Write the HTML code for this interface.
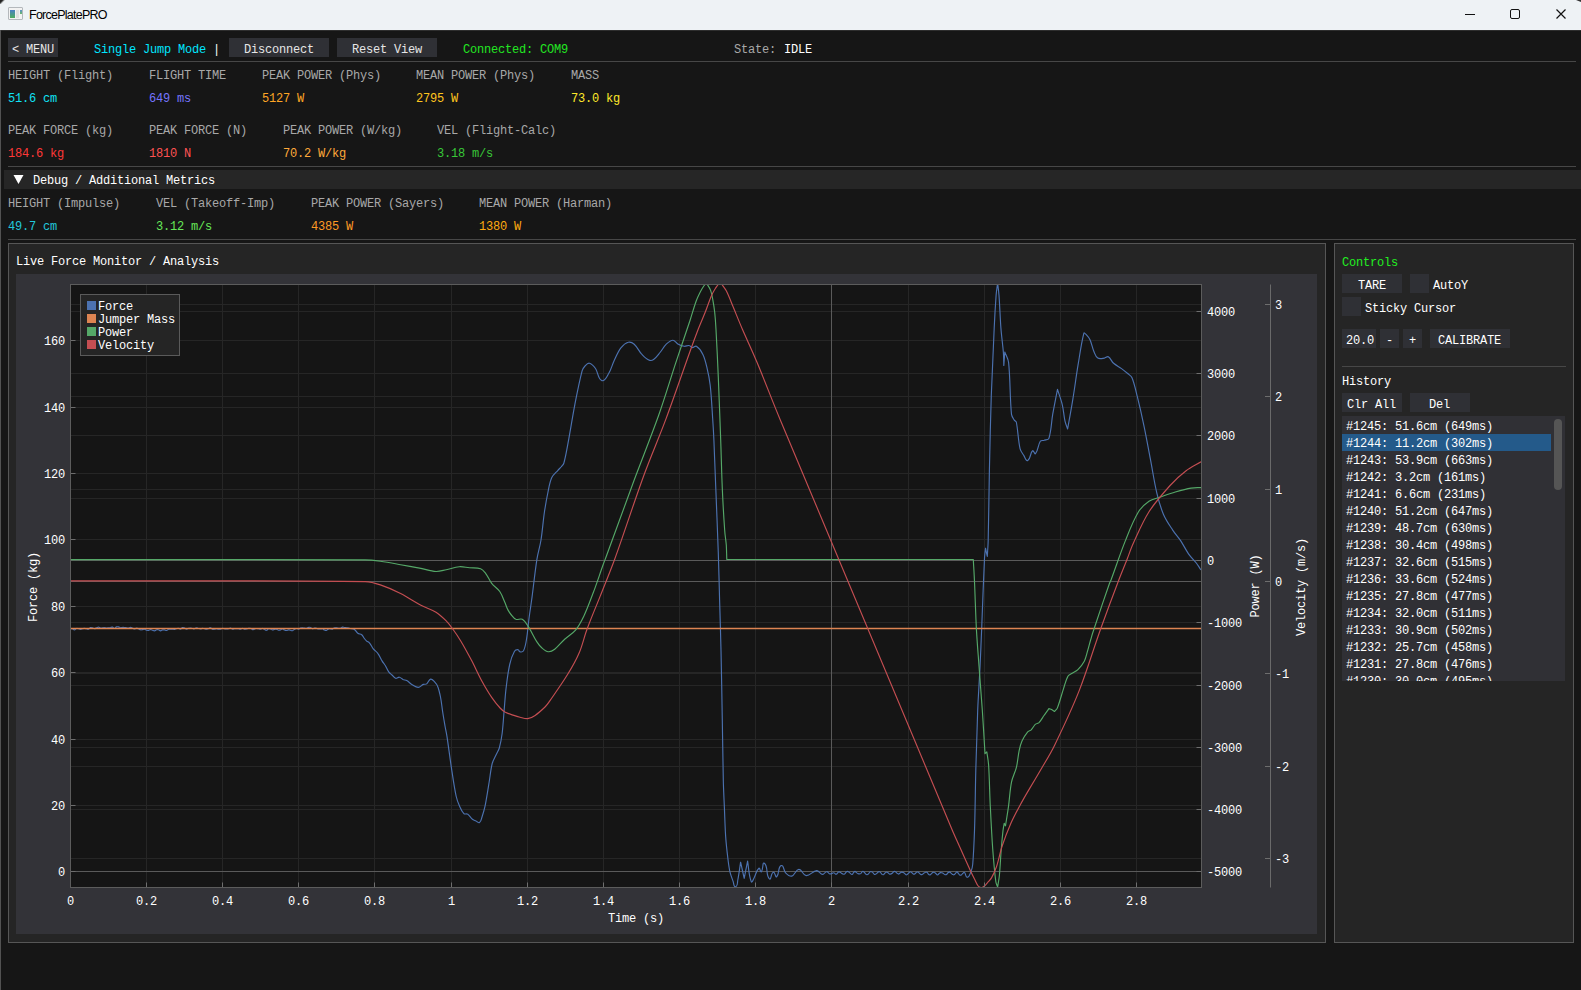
<!DOCTYPE html>
<html><head><meta charset="utf-8">
<style>
*{margin:0;padding:0;box-sizing:border-box}
html,body{width:1581px;height:990px;overflow:hidden;background:#161616}
body{position:relative;font-family:"Liberation Mono",monospace;font-size:12px;color:#e6e6e6}
.a{position:absolute;white-space:pre;line-height:14px}
.t{letter-spacing:-0.2px}
.btn{position:absolute;background:#2f3035}
.sep{position:absolute;height:1px;background:#474747}
.lbl{color:#a8a8a8}
#title{position:absolute;left:0;top:0;width:1581px;height:30px;background:#eef2f5}
</style></head><body>
<div id="title">
  <div class="a" style="left:8px;top:7px;width:15px;height:13px;border:1px solid #b4b8bc;border-radius:1px;background:#f2f2f2"></div>
  <div class="a" style="left:10px;top:10px;width:5px;height:8px;background:linear-gradient(#4a7fc4,#4fae5e)"></div>
  <div class="a" style="left:16px;top:10px;width:3px;height:8px;background:#e0e0e0"></div>
  <div class="a" style="left:20px;top:10px;width:2px;height:4px;background:linear-gradient(#5a90c8,#6ab868)"></div>
  <div class="a" style="left:0;top:0;width:5px;height:4px;background:linear-gradient(135deg,#222 30%,transparent 60%)"></div>
  <div class="a" style="left:29px;top:8px;font-family:'Liberation Sans',sans-serif;font-size:12.5px;letter-spacing:-0.75px;color:#000">ForcePlatePRO</div>
</div>
<!-- top bar -->
<div class="btn" style="left:8px;top:38px;width:50px;height:19px"></div>
<div class="a t" style="left:12px;top:43px">&lt; MENU</div>
<div class="a t" style="left:94px;top:43px;color:#00e6ff">Single Jump Mode</div>
<div class="a t" style="left:213px;top:43px;color:#fff">|</div>
<div class="btn" style="left:229px;top:38px;width:100px;height:19px"></div>
<div class="a t" style="left:244px;top:43px">Disconnect</div>
<div class="btn" style="left:337px;top:38px;width:100px;height:19px"></div>
<div class="a t" style="left:352px;top:43px">Reset View</div>
<div class="a t" style="left:463px;top:43px;color:#22e622">Connected: COM9</div>
<div class="a t" style="left:734px;top:43px;color:#a8a8a8">State:</div>
<div class="a t" style="left:784px;top:43px;color:#fff">IDLE</div>
<div class="sep" style="left:8px;top:61px;width:1568px"></div>

<!-- metrics -->
<div class="a t lbl" style="left:8px;top:69px">HEIGHT (Flight)</div>
<div class="a t lbl" style="left:149px;top:69px">FLIGHT TIME</div>
<div class="a t lbl" style="left:262px;top:69px">PEAK POWER (Phys)</div>
<div class="a t lbl" style="left:416px;top:69px">MEAN POWER (Phys)</div>
<div class="a t lbl" style="left:571px;top:69px">MASS</div>
<div class="a t" style="left:8px;top:92px;color:#10e2f5">51.6 cm</div>
<div class="a t" style="left:149px;top:92px;color:#7575ff">649 ms</div>
<div class="a t" style="left:262px;top:92px;color:#ffa625">5127 W</div>
<div class="a t" style="left:416px;top:92px;color:#ffc51f">2795 W</div>
<div class="a t" style="left:571px;top:92px;color:#ffea2a">73.0 kg</div>

<div class="a t lbl" style="left:8px;top:124px">PEAK FORCE (kg)</div>
<div class="a t lbl" style="left:149px;top:124px">PEAK FORCE (N)</div>
<div class="a t lbl" style="left:283px;top:124px">PEAK POWER (W/kg)</div>
<div class="a t lbl" style="left:437px;top:124px">VEL (Flight-Calc)</div>
<div class="a t" style="left:8px;top:147px;color:#ff3838">184.6 kg</div>
<div class="a t" style="left:149px;top:147px;color:#ff5252">1810 N</div>
<div class="a t" style="left:283px;top:147px;color:#ffaa3a">70.2 W/kg</div>
<div class="a t" style="left:437px;top:147px;color:#38c838">3.18 m/s</div>
<div class="sep" style="left:8px;top:166px;width:1568px"></div>
<div class="a" style="left:4px;top:170px;width:1577px;height:19px;background:#262626"></div>
<svg class="a" style="left:13px;top:174px" width="11" height="11"><path d="M0.5 1 L10.5 1 L5.5 10 Z" fill="#fff"/></svg>
<div class="a t" style="left:33px;top:174px;color:#fff">Debug / Additional Metrics</div>
<div class="a t lbl" style="left:8px;top:197px">HEIGHT (Impulse)</div>
<div class="a t lbl" style="left:156px;top:197px">VEL (Takeoff-Imp)</div>
<div class="a t lbl" style="left:311px;top:197px">PEAK POWER (Sayers)</div>
<div class="a t lbl" style="left:479px;top:197px">MEAN POWER (Harman)</div>
<div class="a t" style="left:8px;top:220px;color:#22c8dc">49.7 cm</div>
<div class="a t" style="left:156px;top:220px;color:#66e858">3.12 m/s</div>
<div class="a t" style="left:311px;top:220px;color:#ff9a25">4385 W</div>
<div class="a t" style="left:479px;top:220px;color:#ffaa10">1380 W</div>
<div class="sep" style="left:8px;top:239px;width:1568px"></div>

<svg class="a" style="left:0;top:0" width="1581" height="30">
<line x1="1465" y1="14.5" x2="1475" y2="14.5" stroke="#111" stroke-width="1"/>
<rect x="1510.5" y="9.5" width="9" height="9" rx="1.5" fill="none" stroke="#111" stroke-width="1"/>
<path d="M1556.5 9.5 L1565.5 18.5 M1565.5 9.5 L1556.5 18.5" stroke="#111" stroke-width="1.2"/>
<path d="M1576 0 L1581 0 L1581 2 Z" fill="#333"/>
</svg>
<div class="a" style="left:0;top:30px;width:1581px;height:1px;background:#2e2e2e"></div>
<div class="a" style="left:0;top:30px;width:1px;height:960px;background:#525252"></div>
<div class="a" style="left:8px;top:243px;width:1318px;height:700px;background:#252525;border:1px solid #565656"></div>
<div class="a t" style="left:16px;top:255px;color:#fff">Live Force Monitor / Analysis</div>
<div class="a" style="left:16px;top:274px;width:1301px;height:660px;background:#333338"></div>
<div class="a" style="left:70px;top:284px;width:1132px;height:604px;background:#151515"></div>
<svg class="a" style="left:0;top:0" width="1581" height="990"><line x1="70.5" y1="284.5" x2="70.5" y2="887.5" stroke="#262626"/>
<line x1="146.5" y1="284.5" x2="146.5" y2="887.5" stroke="#262626"/>
<line x1="222.5" y1="284.5" x2="222.5" y2="887.5" stroke="#262626"/>
<line x1="298.5" y1="284.5" x2="298.5" y2="887.5" stroke="#262626"/>
<line x1="374.5" y1="284.5" x2="374.5" y2="887.5" stroke="#262626"/>
<line x1="451.5" y1="284.5" x2="451.5" y2="887.5" stroke="#262626"/>
<line x1="527.5" y1="284.5" x2="527.5" y2="887.5" stroke="#262626"/>
<line x1="603.5" y1="284.5" x2="603.5" y2="887.5" stroke="#262626"/>
<line x1="679.5" y1="284.5" x2="679.5" y2="887.5" stroke="#262626"/>
<line x1="755.5" y1="284.5" x2="755.5" y2="887.5" stroke="#262626"/>
<line x1="831.5" y1="284.5" x2="831.5" y2="887.5" stroke="#262626"/>
<line x1="908.5" y1="284.5" x2="908.5" y2="887.5" stroke="#262626"/>
<line x1="984.5" y1="284.5" x2="984.5" y2="887.5" stroke="#262626"/>
<line x1="1060.5" y1="284.5" x2="1060.5" y2="887.5" stroke="#262626"/>
<line x1="1136.5" y1="284.5" x2="1136.5" y2="887.5" stroke="#262626"/>
<line x1="70.5" y1="871.5" x2="1201.5" y2="871.5" stroke="#262626"/>
<line x1="70.5" y1="805.5" x2="1201.5" y2="805.5" stroke="#262626"/>
<line x1="70.5" y1="739.5" x2="1201.5" y2="739.5" stroke="#262626"/>
<line x1="70.5" y1="672.5" x2="1201.5" y2="672.5" stroke="#262626"/>
<line x1="70.5" y1="606.5" x2="1201.5" y2="606.5" stroke="#262626"/>
<line x1="70.5" y1="539.5" x2="1201.5" y2="539.5" stroke="#262626"/>
<line x1="70.5" y1="473.5" x2="1201.5" y2="473.5" stroke="#262626"/>
<line x1="70.5" y1="407.5" x2="1201.5" y2="407.5" stroke="#262626"/>
<line x1="70.5" y1="340.5" x2="1201.5" y2="340.5" stroke="#262626"/>
<line x1="70.5" y1="871.5" x2="1201.5" y2="871.5" stroke="#262626"/>
<line x1="70.5" y1="809.5" x2="1201.5" y2="809.5" stroke="#262626"/>
<line x1="70.5" y1="747.5" x2="1201.5" y2="747.5" stroke="#262626"/>
<line x1="70.5" y1="685.5" x2="1201.5" y2="685.5" stroke="#262626"/>
<line x1="70.5" y1="622.5" x2="1201.5" y2="622.5" stroke="#262626"/>
<line x1="70.5" y1="560.5" x2="1201.5" y2="560.5" stroke="#262626"/>
<line x1="70.5" y1="498.5" x2="1201.5" y2="498.5" stroke="#262626"/>
<line x1="70.5" y1="435.5" x2="1201.5" y2="435.5" stroke="#262626"/>
<line x1="70.5" y1="373.5" x2="1201.5" y2="373.5" stroke="#262626"/>
<line x1="70.5" y1="311.5" x2="1201.5" y2="311.5" stroke="#262626"/>
<line x1="70.5" y1="858.5" x2="1201.5" y2="858.5" stroke="#262626"/>
<line x1="70.5" y1="766.5" x2="1201.5" y2="766.5" stroke="#262626"/>
<line x1="70.5" y1="673.5" x2="1201.5" y2="673.5" stroke="#262626"/>
<line x1="70.5" y1="581.5" x2="1201.5" y2="581.5" stroke="#262626"/>
<line x1="70.5" y1="489.5" x2="1201.5" y2="489.5" stroke="#262626"/>
<line x1="70.5" y1="396.5" x2="1201.5" y2="396.5" stroke="#262626"/>
<line x1="70.5" y1="304.5" x2="1201.5" y2="304.5" stroke="#262626"/>
<line x1="70.5" y1="560.5" x2="1201.5" y2="560.5" stroke="#5a5a5a"/>
<line x1="70.5" y1="581.5" x2="1201.5" y2="581.5" stroke="#5a5a5a"/>
<line x1="70.5" y1="871.5" x2="1201.5" y2="871.5" stroke="#5a5a5a"/>
<line x1="831.5" y1="284.5" x2="831.5" y2="887.5" stroke="#5a5a5a"/>
<defs><clipPath id="pc"><rect x="71" y="285" width="1130" height="602"/></clipPath></defs><g clip-path="url(#pc)" fill="none" stroke-linejoin="round" stroke-width="1.15"><path d="M70.5,628.6 C71.2,628.6 71.9,628.5 72.5,628.7 C73.2,629.0 73.7,630.0 74.5,629.9 C75.3,629.9 75.7,628.7 76.5,628.5 C77.1,628.3 77.8,628.5 78.5,628.7 C79.2,628.8 79.8,629.4 80.5,629.4 C81.2,629.4 81.8,628.8 82.5,628.6 C83.2,628.5 83.8,628.4 84.5,628.4 C85.2,628.4 85.8,628.6 86.5,628.7 C87.2,628.9 87.8,629.3 88.5,629.1 C89.3,628.9 89.7,627.9 90.5,627.6 C91.1,627.4 91.8,627.7 92.5,627.9 C93.2,628.1 93.8,628.6 94.5,628.6 C95.2,628.6 95.8,628.2 96.5,627.9 C97.2,627.7 97.8,627.0 98.5,627.0 C99.2,627.1 99.8,627.9 100.5,628.0 C101.2,628.2 101.8,628.0 102.5,627.9 C103.2,627.8 103.8,627.5 104.5,627.6 C105.2,627.6 105.8,628.1 106.5,628.1 C107.2,628.1 107.8,628.0 108.5,627.9 C109.2,627.7 109.8,627.6 110.5,627.5 C111.2,627.3 111.8,627.0 112.5,627.1 C113.3,627.3 113.7,628.5 114.5,628.4 C115.3,628.4 115.7,627.2 116.5,626.9 C117.1,626.7 117.8,626.8 118.5,626.9 C119.2,627.1 119.8,627.7 120.5,627.8 C121.2,627.9 121.8,627.4 122.5,627.4 C123.2,627.3 123.8,627.4 124.5,627.5 C125.2,627.5 125.8,627.7 126.5,627.8 C127.2,627.9 127.8,628.2 128.5,628.1 C129.2,628.0 129.8,627.3 130.5,627.3 C131.2,627.3 131.9,627.7 132.5,628.0 C133.2,628.3 133.8,629.0 134.5,629.0 C135.2,629.0 135.8,628.1 136.5,628.1 C137.2,628.0 137.9,628.4 138.5,628.7 C139.2,629.0 139.8,629.6 140.5,629.8 C141.2,629.9 141.8,629.7 142.5,629.6 C143.2,629.5 143.8,629.1 144.5,629.2 C145.2,629.3 145.8,630.0 146.5,630.3 C147.1,630.4 147.8,630.5 148.5,630.4 C149.2,630.2 149.8,629.6 150.5,629.5 C151.2,629.5 151.8,629.9 152.5,630.2 C153.2,630.4 153.8,631.0 154.5,630.9 C155.3,630.9 155.8,630.1 156.5,629.8 C157.1,629.7 157.9,629.6 158.5,629.8 C159.2,630.0 159.7,630.8 160.5,630.8 C161.2,630.9 161.8,630.1 162.5,629.9 C163.2,629.8 163.8,629.9 164.5,629.9 C165.2,630.0 165.8,630.6 166.5,630.5 C167.3,630.4 167.8,629.6 168.5,629.3 C169.1,629.1 169.8,629.1 170.5,629.1 C171.2,629.0 171.8,629.0 172.5,629.0 C173.2,629.1 173.8,629.4 174.5,629.4 C175.2,629.3 175.8,628.8 176.5,628.6 C177.2,628.4 177.8,628.2 178.5,628.3 C179.2,628.4 179.8,629.2 180.5,629.1 C181.3,628.9 181.7,627.7 182.5,627.5 C183.2,627.4 183.9,627.8 184.5,628.0 C185.2,628.3 185.8,629.0 186.5,629.1 C187.2,629.1 187.8,628.5 188.5,628.3 C189.2,628.2 189.8,628.1 190.5,628.1 C191.2,628.1 191.8,628.4 192.5,628.5 C193.2,628.6 193.8,629.0 194.5,628.8 C195.2,628.7 195.8,627.9 196.5,627.9 C197.2,627.8 197.8,628.3 198.5,628.5 C199.2,628.7 199.8,628.9 200.5,628.9 C201.2,628.8 201.8,628.4 202.5,628.3 C203.2,628.3 203.8,628.5 204.5,628.6 C205.2,628.7 205.8,629.1 206.5,629.1 C207.2,629.1 207.9,628.9 208.5,628.6 C209.2,628.4 209.8,627.5 210.5,627.7 C211.4,627.8 211.7,629.0 212.5,629.3 C213.1,629.6 213.8,629.2 214.5,629.1 C215.2,629.0 215.8,628.6 216.5,628.6 C217.2,628.6 217.8,629.1 218.5,629.2 C219.2,629.3 219.9,629.2 220.5,629.1 C221.2,628.9 221.8,628.3 222.5,628.2 C223.2,628.2 223.8,628.7 224.5,628.8 C225.2,628.9 225.8,629.0 226.5,629.0 C227.2,629.0 227.8,628.8 228.5,628.7 C229.2,628.5 229.8,628.0 230.5,628.1 C231.2,628.2 231.8,629.0 232.5,629.1 C233.2,629.2 233.8,628.8 234.5,628.7 C235.2,628.6 235.8,628.6 236.5,628.6 C237.2,628.6 237.8,628.7 238.5,628.8 C239.2,628.9 239.8,629.2 240.5,629.1 C241.2,629.0 241.8,628.2 242.5,628.2 C243.2,628.2 243.8,628.9 244.5,629.1 C245.2,629.2 245.8,629.1 246.5,629.0 C247.2,628.8 247.8,628.5 248.5,628.4 C249.2,628.3 249.9,628.1 250.5,628.3 C251.3,628.5 251.7,629.5 252.5,629.6 C253.2,629.7 253.8,629.2 254.5,629.1 C255.2,628.9 255.8,628.5 256.5,628.5 C257.2,628.4 257.8,628.7 258.5,628.8 C259.2,628.9 259.8,629.2 260.5,629.2 C261.2,629.1 261.8,628.2 262.5,628.3 C263.3,628.3 263.8,629.1 264.5,629.5 C265.1,629.8 265.8,630.5 266.5,630.3 C267.3,630.2 267.7,629.0 268.5,628.7 C269.1,628.5 269.9,628.7 270.5,628.9 C271.2,629.1 271.8,629.8 272.5,629.9 C273.2,630.0 273.8,629.5 274.5,629.4 C275.2,629.3 275.8,629.0 276.5,629.1 C277.2,629.3 277.8,630.1 278.5,630.2 C279.2,630.3 279.9,630.1 280.5,629.9 C281.2,629.7 281.7,628.8 282.5,628.8 C283.3,628.9 283.8,629.7 284.5,630.0 C285.1,630.3 285.8,630.5 286.5,630.5 C287.2,630.5 287.8,629.8 288.5,629.8 C289.2,629.8 289.8,630.2 290.5,630.3 C291.2,630.5 291.8,630.8 292.5,630.7 C293.3,630.5 293.8,629.7 294.5,629.3 C295.1,629.0 295.8,628.5 296.5,628.5 C297.2,628.4 297.8,629.1 298.5,629.1 C299.2,629.0 299.8,628.4 300.5,628.1 C301.1,627.9 301.8,627.9 302.5,627.9 C303.2,627.9 303.8,628.1 304.5,628.1 C305.2,628.2 305.8,628.5 306.5,628.4 C307.2,628.2 307.8,627.5 308.5,627.4 C309.2,627.2 309.9,627.3 310.5,627.6 C311.2,627.8 311.7,628.7 312.5,628.8 C313.2,628.8 313.8,628.1 314.5,628.0 C315.2,627.9 315.8,628.2 316.5,628.3 C317.2,628.5 317.8,628.8 318.5,629.0 C319.2,629.1 319.8,629.0 320.5,629.0 C321.2,629.0 321.8,628.7 322.5,628.8 C323.2,629.0 323.8,629.7 324.5,630.0 C325.1,630.2 325.8,630.6 326.5,630.4 C327.3,630.2 327.7,629.2 328.5,628.9 C329.1,628.7 329.8,628.8 330.5,628.8 C331.2,628.8 331.8,629.3 332.5,629.1 C333.3,628.9 333.7,628.0 334.5,627.8 C335.1,627.6 335.8,627.7 336.5,627.8 C337.2,627.9 337.8,628.1 338.5,628.2 C339.2,628.3 339.9,628.4 340.5,628.2 C341.2,628.0 341.7,627.3 342.5,627.1 C343.2,627.0 343.8,627.5 344.5,627.5 C345.0,627.6 345.6,627.5 346.1,627.6 C347.4,627.8 348.7,628.2 350.0,628.5 C351.5,628.8 353.1,628.6 354.4,629.4 C355.9,630.3 356.4,632.3 357.8,633.3 C358.9,634.1 360.6,633.9 361.7,634.7 C362.8,635.5 363.2,636.9 364.0,638.0 C364.8,639.1 365.7,640.2 366.7,641.1 C367.5,641.8 368.7,642.0 369.4,642.8 C371.0,644.6 371.8,647.0 373.3,648.9 C374.6,650.5 376.6,651.6 377.8,653.3 C379.6,655.7 380.6,658.6 382.2,661.1 C383.0,662.5 384.2,663.6 385.0,665.0 C386.4,667.3 387.3,670.0 388.9,672.2 C389.7,673.3 391.0,674.1 392.0,675.0 C393.2,676.1 394.0,677.8 395.6,678.3 C396.9,678.7 398.1,677.0 399.4,677.2 C400.8,677.4 401.7,678.9 403.0,679.5 C404.2,680.0 405.6,680.0 406.7,680.6 C408.7,681.7 410.2,683.5 412.2,684.7 C414.1,685.8 416.1,687.5 418.3,687.4 C420.2,687.3 421.5,685.1 423.3,684.4 C424.4,684.0 425.8,684.6 426.7,683.9 C428.4,682.7 428.6,679.7 430.6,679.1 C432.1,678.7 433.3,680.6 434.4,681.7 C435.8,683.2 437.1,684.8 437.8,686.7 C439.1,690.0 439.8,693.5 440.5,697.0 C441.5,702.0 441.9,707.0 442.7,712.0 C443.4,716.7 444.2,721.3 445.0,726.0 C445.6,729.5 446.5,733.0 447.0,736.6 C448.5,746.5 449.7,756.4 451.2,766.3 C452.7,776.2 454.0,786.2 456.1,796.0 C456.8,799.4 458.1,802.8 459.5,806.0 C460.7,808.7 461.8,811.6 463.9,813.7 C464.7,814.6 466.5,813.4 467.5,814.1 C469.5,815.4 470.6,817.8 472.4,819.3 C473.4,820.1 474.8,820.4 476.0,821.0 C477.2,821.5 478.4,823.3 479.5,822.6 C481.2,821.5 481.4,818.9 482.0,817.0 C483.2,813.4 484.3,809.7 485.1,805.9 C486.8,797.5 488.0,789.0 489.4,780.5 C490.3,774.8 490.8,769.1 492.2,763.5 C493.0,760.5 494.7,757.8 496.0,755.0 C497.1,752.7 498.6,750.5 499.3,748.0 C500.6,743.4 501.5,738.6 502.1,733.8 C503.0,726.6 503.4,719.3 504.0,712.0 C504.7,704.3 505.1,696.6 506.0,688.9 C507.0,680.7 507.9,672.5 509.7,664.5 C510.7,659.9 512.2,655.4 514.5,651.3 C515.2,650.1 516.9,649.6 518.2,649.7 C519.1,649.8 518.9,651.6 519.8,651.8 C521.1,652.1 522.9,651.9 523.5,650.8 C525.5,646.9 526.0,642.3 526.7,638.0 C527.7,632.0 528.0,626.0 528.8,620.0 C529.3,616.0 529.9,612.0 530.5,608.0 C531.0,604.2 531.6,600.4 532.1,596.6 C533.7,584.2 535.0,571.8 536.9,559.4 C537.9,552.9 540.0,546.5 541.0,540.0 C542.5,530.5 543.1,521.0 544.5,511.5 C545.5,505.0 546.6,498.5 548.0,492.0 C549.0,487.1 549.7,482.1 551.8,477.6 C553.1,474.7 555.8,472.7 557.9,470.3 C558.9,469.2 560.0,468.2 561.0,467.0 C562.0,465.7 563.5,464.6 563.9,463.0 C566.1,455.1 567.3,446.9 568.8,438.8 C570.9,427.5 572.6,416.1 574.8,404.8 C577.0,393.5 579.2,382.1 582.1,370.9 C582.6,369.1 583.7,367.4 585.0,366.0 C586.2,364.7 587.7,362.8 589.4,363.2 C592.0,363.8 593.9,366.3 595.5,368.5 C598.2,372.2 597.7,379.0 602.0,380.6 C605.1,381.7 607.1,376.1 608.8,373.3 C611.1,369.5 612.1,365.0 614.0,361.0 C616.1,356.5 617.9,351.8 620.9,347.9 C622.8,345.5 625.2,343.1 628.2,342.3 C630.2,341.7 632.6,342.8 634.2,344.2 C637.2,346.9 638.8,350.9 641.5,353.9 C643.7,356.2 645.9,358.7 648.8,360.0 C650.3,360.7 652.3,360.4 653.6,359.5 C656.2,357.7 658.0,354.9 660.0,352.5 C662.3,349.7 663.9,346.4 666.5,343.9 C668.3,342.2 670.4,340.2 672.9,340.2 C674.9,340.2 676.0,342.9 677.8,343.9 C679.8,345.0 682.0,346.0 684.3,346.3 C685.9,346.5 687.5,345.2 689.1,345.5 C690.4,345.7 691.1,347.5 692.4,347.6 C693.8,347.8 695.2,345.5 696.4,346.3 C699.3,348.2 701.4,351.3 702.9,354.4 C704.9,358.5 705.9,363.0 706.9,367.4 C708.3,373.3 709.5,379.2 710.2,385.2 C711.4,395.9 711.9,406.7 712.6,417.5 C713.1,425.1 713.6,432.6 713.9,440.2 C714.6,456.3 715.2,472.4 715.8,488.5 C716.6,510.0 717.6,531.6 718.3,553.1 C718.8,568.7 719.2,584.4 719.6,600.0 C720.1,616.7 720.6,633.3 721.0,650.0 C721.5,673.3 721.9,696.7 722.3,720.0 C722.7,740.0 722.8,760.0 723.3,780.0 C723.5,789.3 724.0,798.5 724.4,807.8 C724.8,817.1 725.0,826.3 725.6,835.6 C726.1,843.0 726.9,850.4 727.8,857.8 C728.4,862.6 728.9,867.5 730.0,872.2 C730.7,875.2 731.9,878.1 733.0,881.0 C733.8,882.9 733.6,887.1 735.6,886.7 C737.9,886.2 737.3,882.3 737.8,880.0 C739.0,874.1 739.7,868.1 740.6,862.2 C741.8,867.6 743.0,872.9 744.2,878.3 C745.3,872.6 746.5,866.8 747.6,861.1 C748.8,868.0 748.6,875.3 751.3,881.7 C752.0,883.4 753.5,878.8 754.4,877.2 C756.0,874.3 756.3,870.4 758.9,868.3 C760.0,867.4 760.3,872.6 761.3,871.7 C763.5,869.7 762.2,861.3 764.4,863.3 C768.5,866.9 765.5,875.0 769.4,878.9 C771.2,880.7 770.8,872.9 773.3,872.2 C775.1,871.7 775.3,877.9 776.7,876.7 C779.7,874.1 777.5,867.2 781.1,865.6 C783.7,864.5 783.6,870.8 785.6,872.8 C787.2,874.4 789.5,876.7 791.7,876.1 C794.9,875.3 795.6,869.5 798.9,869.4 C802.1,869.3 802.9,875.4 806.1,875.6 C810.0,875.9 812.8,870.9 816.7,870.6 C818.9,870.4 820.0,874.2 822.2,874.4 C823.9,874.6 825.0,871.8 826.7,871.7 C828.0,871.6 828.7,873.7 830.0,873.9 C831.4,874.1 832.6,872.7 834.0,872.8 C834.7,872.8 834.9,873.9 835.5,874.1 C836.0,874.2 836.6,874.0 837.0,873.7 C837.6,873.3 837.8,872.4 838.5,872.0 C838.9,871.8 839.5,871.9 840.0,872.1 C840.6,872.3 841.0,872.8 841.5,873.2 C842.0,873.5 842.4,873.9 843.0,874.0 C843.5,874.2 844.1,874.3 844.5,874.1 C845.2,873.7 845.4,872.8 846.0,872.3 C846.4,871.9 846.9,871.3 847.5,871.3 C848.1,871.3 848.5,871.9 849.0,872.2 C849.5,872.7 850.0,873.2 850.5,873.6 C851.0,874.0 851.4,874.7 852.0,874.5 C852.8,874.3 853.0,873.2 853.5,872.7 C854.0,872.2 854.3,871.3 855.0,871.3 C855.7,871.3 856.0,872.2 856.5,872.6 C857.0,873.0 857.4,873.4 858.0,873.6 C858.5,873.8 859.0,874.0 859.5,873.9 C860.0,873.9 860.6,873.7 861.0,873.4 C861.6,872.8 861.8,871.8 862.5,871.5 C863.0,871.2 863.6,871.6 864.0,872.0 C864.6,872.4 864.9,873.3 865.5,873.8 C865.9,874.2 866.4,874.7 867.0,874.7 C867.6,874.7 868.1,874.2 868.5,873.8 C869.1,873.3 869.3,872.4 870.0,871.9 C870.4,871.6 871.0,871.5 871.5,871.7 C872.1,871.8 872.6,872.3 873.0,872.7 C873.6,873.2 873.8,874.2 874.5,874.5 C875.0,874.7 875.5,874.2 876.0,873.9 C876.6,873.6 877.0,873.1 877.5,872.7 C878.0,872.3 878.4,871.6 879.0,871.5 C879.6,871.5 880.1,872.0 880.5,872.4 C881.1,873.0 881.3,873.9 882.0,874.4 C882.4,874.7 883.0,874.8 883.5,874.6 C884.1,874.3 884.5,873.5 885.0,873.0 C885.5,872.7 885.9,872.1 886.5,872.0 C887.0,872.0 887.5,872.4 888.0,872.7 C888.6,873.1 888.9,873.8 889.5,874.1 C890.0,874.3 890.5,874.1 891.0,873.9 C891.6,873.7 892.0,873.4 892.5,873.0 C893.0,872.6 893.4,871.9 894.0,871.6 C894.5,871.4 895.1,871.4 895.5,871.7 C896.1,872.0 896.5,872.7 897.0,873.1 C897.5,873.5 897.9,874.1 898.5,874.1 C899.1,874.1 899.5,873.4 900.0,873.1 C900.5,872.8 900.9,872.3 901.5,872.1 C902.0,872.0 902.5,872.2 903.0,872.4 C903.5,872.6 904.0,872.9 904.5,873.3 C905.1,873.7 905.3,874.6 906.0,874.8 C906.5,874.9 907.1,874.5 907.5,874.2 C908.1,873.8 908.5,873.1 909.0,872.7 C909.5,872.3 909.9,871.7 910.5,871.8 C911.1,871.8 911.5,872.5 912.0,872.8 C912.5,873.2 912.9,873.9 913.5,874.1 C914.0,874.2 914.6,874.0 915.0,873.7 C915.6,873.3 915.9,872.6 916.5,872.3 C916.9,872.0 917.5,871.9 918.0,872.0 C918.6,872.2 919.0,872.9 919.5,873.3 C920.0,873.7 920.4,874.4 921.0,874.6 C921.5,874.8 922.0,874.5 922.5,874.3 C923.1,874.0 923.5,873.4 924.0,873.1 C924.5,872.8 925.0,872.4 925.5,872.3 C926.0,872.1 926.6,872.0 927.0,872.3 C927.7,872.7 927.9,873.7 928.5,874.3 C928.9,874.7 929.5,875.0 930.0,874.9 C930.6,874.8 931.0,874.0 931.5,873.6 C932.0,873.2 932.4,872.6 933.0,872.4 C933.5,872.2 934.0,872.3 934.5,872.5 C935.1,872.7 935.5,873.2 936.0,873.6 C936.5,874.1 936.8,875.0 937.5,875.0 C938.2,874.9 938.5,874.0 939.0,873.5 C939.5,873.2 939.9,872.8 940.5,872.6 C941.0,872.5 941.5,872.7 942.0,872.8 C942.5,873.0 943.0,873.3 943.5,873.6 C944.0,874.0 944.4,874.5 945.0,874.6 C945.5,874.8 946.1,874.8 946.5,874.5 C947.1,874.1 947.4,873.3 948.0,872.8 C948.4,872.5 948.9,871.9 949.5,871.9 C950.1,872.0 950.5,872.7 951.0,873.1 C951.5,873.5 951.9,874.1 952.5,874.4 C953.0,874.6 953.5,875.0 954.0,874.8 C954.7,874.6 955.0,873.8 955.5,873.3 C956.0,872.8 956.3,871.8 957.0,871.9 C957.7,872.0 958.0,873.1 958.5,873.6 C959.0,874.1 959.3,874.9 960.0,875.2 C960.5,875.3 961.1,875.1 961.5,874.8 C962.1,874.4 962.4,873.6 963.0,873.2 C963.4,872.8 964.1,872.0 964.5,872.4 C965.9,873.7 965.4,877.5 967.3,877.3 C969.5,877.1 970.0,873.8 970.9,871.8 C971.9,869.5 972.5,867.0 972.7,864.5 C973.7,853.2 974.1,841.9 974.5,830.6 C975.2,810.4 975.3,790.2 975.8,770.0 C976.3,750.0 976.9,730.0 977.7,710.0 C978.3,695.8 979.3,681.5 980.0,667.3 C980.7,653.4 981.2,639.4 981.8,625.5 C982.7,603.1 983.4,580.6 984.5,558.2 C984.7,554.9 985.2,551.5 985.5,548.2 C986.1,550.9 986.7,553.7 987.3,556.4 C987.6,550.9 988.1,545.5 988.2,540.0 C988.8,516.7 988.9,493.3 989.4,470.0 C989.9,445.1 990.5,420.1 991.3,395.2 C992.1,372.8 993.1,350.4 994.2,328.0 C994.7,317.1 995.3,306.3 996.1,295.4 C996.4,291.2 997.1,287.1 997.6,283.0 C998.1,287.1 998.7,291.3 999.0,295.4 C999.8,306.3 1000.1,317.1 1000.9,328.0 C1001.5,336.3 1002.8,344.6 1003.4,352.9 C1003.7,357.1 1003.7,361.2 1003.8,365.4 C1004.1,360.9 1004.5,356.5 1004.8,352.0 C1006.1,355.5 1008.2,358.8 1008.6,362.5 C1010.4,379.7 1009.8,397.2 1011.5,414.4 C1011.7,416.5 1013.2,418.3 1014.3,420.1 C1014.8,420.9 1016.1,421.1 1016.3,422.0 C1018.1,430.9 1018.1,440.1 1020.1,448.9 C1020.7,451.4 1022.5,453.5 1023.9,455.6 C1025.0,457.3 1026.0,461.4 1027.8,460.4 C1030.9,458.7 1029.9,453.1 1032.6,450.8 C1033.6,449.9 1034.6,454.8 1035.5,453.7 C1038.3,450.2 1037.9,445.0 1040.3,441.2 C1041.0,440.1 1042.9,440.7 1044.1,440.3 C1045.7,439.7 1048.4,439.9 1048.9,438.3 C1051.4,430.6 1051.3,422.3 1052.7,414.4 C1054.2,406.0 1055.9,397.7 1057.5,389.4 C1059.1,394.5 1061.1,399.6 1062.3,404.8 C1063.6,410.2 1063.8,415.7 1065.0,421.1 C1065.6,423.8 1066.7,426.4 1067.6,429.0 C1069.4,418.9 1071.3,408.9 1072.9,398.8 C1074.8,387.5 1076.2,376.0 1078.1,364.7 C1079.9,354.1 1081.2,343.5 1083.9,333.1 C1084.1,332.3 1085.4,333.8 1086.0,334.4 C1087.5,336.0 1089.1,337.7 1090.0,339.7 C1091.7,343.5 1092.3,347.7 1093.9,351.5 C1094.9,353.9 1095.6,356.7 1097.8,358.1 C1099.7,359.3 1102.2,358.4 1104.4,358.1 C1105.8,357.9 1107.1,356.1 1108.3,356.8 C1110.7,358.2 1111.5,361.4 1113.6,363.3 C1116.0,365.4 1118.9,366.7 1121.5,368.6 C1123.7,370.2 1125.9,372.0 1128.0,373.8 C1129.4,375.0 1131.3,376.1 1132.0,377.8 C1134.4,383.7 1135.7,390.0 1137.2,396.2 C1139.6,405.8 1141.8,415.4 1143.8,425.1 C1146.2,436.4 1148.2,447.8 1150.4,459.2 C1152.6,470.6 1154.2,482.1 1156.9,493.4 C1158.6,500.5 1160.6,507.7 1163.5,514.4 C1165.9,520.0 1169.4,525.0 1172.7,530.1 C1175.1,533.8 1178.2,537.0 1180.6,540.6 C1183.4,544.9 1185.6,549.6 1188.5,553.8 C1190.8,557.1 1193.8,559.8 1196.3,563.0 C1198.0,565.2 1199.4,567.7 1201.0,570.0" stroke="#4c72b0"/><polyline points="70.5,628.6 1201.5,628.6" stroke="#dd8452" stroke-width="1.5"/><path d="M70.5,559.6 C168.7,559.7 267.0,559.4 365.2,559.9 C370.3,559.9 375.4,560.6 380.4,561.3 C387.2,562.2 393.9,563.5 400.6,564.7 C407.4,565.9 414.1,567.1 420.9,568.4 C425.9,569.4 430.9,571.2 436.0,571.5 C439.4,571.7 442.8,570.4 446.2,569.7 C450.6,568.8 454.8,567.1 459.3,566.7 C462.7,566.4 466.0,567.4 469.4,567.7 C473.1,568.1 477.1,567.5 480.6,568.7 C482.7,569.4 484.2,571.5 485.6,573.3 C488.0,576.4 489.3,580.3 491.7,583.4 C494.0,586.4 497.6,588.4 499.8,591.5 C502.1,594.9 503.3,598.9 504.9,602.6 C505.9,604.9 506.6,607.4 507.8,609.6 C508.7,611.3 509.7,613.0 511.0,614.5 C512.5,616.3 513.8,618.4 515.9,619.3 C517.9,620.1 520.6,618.1 522.4,619.3 C525.3,621.1 526.9,624.5 528.8,627.4 C531.8,632.1 533.9,637.2 536.9,641.9 C538.3,644.1 540.0,646.3 542.0,648.0 C543.8,649.6 545.9,651.5 548.3,651.7 C550.6,651.9 552.9,650.6 554.7,649.2 C558.3,646.4 561.0,642.6 564.4,639.5 C568.1,636.1 572.6,633.6 575.8,629.8 C579.2,625.7 581.6,620.8 583.9,616.0 C587.6,608.1 590.5,599.9 593.6,591.8 C597.0,582.7 600.0,573.5 603.3,564.3 C604.3,561.5 605.4,558.8 606.4,556.0 C615.7,530.7 624.8,505.3 634.2,480.0 C642.2,458.6 650.8,437.4 658.5,415.8 C664.6,398.6 669.8,381.0 675.5,363.6 C680.3,349.2 685.2,334.9 690.0,320.5 C692.1,314.1 693.8,307.6 696.1,301.2 C697.2,298.2 698.6,295.3 700.0,292.5 C701.2,290.1 702.6,287.7 704.1,285.5 C704.6,284.7 705.4,284.2 706.0,283.5 C706.6,284.0 707.3,284.5 707.7,285.1 C708.9,286.8 710.0,288.6 710.7,290.6 C711.7,293.4 712.2,296.3 712.7,299.2 C713.5,303.5 714.2,307.9 714.7,312.3 C715.3,318.0 715.7,323.8 716.0,329.5 C716.9,345.4 717.6,361.2 718.3,377.1 C719.2,398.1 719.9,419.2 720.7,440.2 C721.3,456.3 721.6,472.4 722.3,488.5 C722.9,502.5 723.7,516.5 724.7,530.5 C725.0,535.4 725.9,540.2 726.3,545.0 C726.6,549.8 726.6,554.7 726.8,559.5 C809.0,559.5 891.1,559.5 973.3,559.5 C973.7,566.9 974.2,574.4 974.5,581.8 C975.2,597.6 975.6,613.3 976.4,629.1 C977.1,641.8 978.2,654.6 979.1,667.3 C980.1,681.5 981.3,695.8 982.3,710.0 C983.3,724.5 984.1,739.1 985.0,753.6 C985.6,753.0 986.2,752.4 986.8,751.8 C987.4,756.2 988.3,760.6 988.6,765.0 C989.5,778.8 989.6,792.6 990.3,806.4 C991.0,820.5 991.7,834.7 992.7,848.8 C993.5,859.7 994.4,870.6 995.8,881.5 C996.0,883.4 997.0,885.2 997.6,887.0 C998.2,883.2 999.0,879.4 999.4,875.5 C1000.2,867.0 1000.5,858.5 1001.2,850.0 C1001.7,843.5 1002.3,837.1 1003.0,830.6 C1003.3,828.1 1003.8,825.7 1004.2,823.3 C1004.6,824.1 1005.1,825.0 1005.5,825.8 C1006.5,819.3 1007.6,812.9 1008.5,806.4 C1009.6,798.3 1009.9,790.1 1011.5,782.1 C1012.5,777.0 1015.2,772.4 1016.4,767.3 C1017.8,761.7 1018.0,755.9 1019.2,750.3 C1019.9,747.2 1020.7,744.0 1022.0,741.1 C1023.5,737.8 1025.4,734.7 1027.7,731.9 C1028.6,730.8 1030.2,730.8 1031.2,729.8 C1032.9,728.1 1033.8,725.8 1035.5,724.2 C1036.4,723.3 1038.1,723.6 1039.0,722.7 C1041.0,720.6 1042.3,717.9 1044.0,715.5 C1045.6,713.2 1047.3,710.9 1048.9,708.6 C1049.6,708.8 1050.3,709.0 1051.0,709.3 C1052.2,709.9 1053.4,710.7 1054.6,711.4 C1055.5,710.2 1056.9,709.3 1057.4,707.9 C1059.9,701.4 1061.5,694.7 1063.7,688.1 C1065.0,684.1 1065.9,679.8 1068.0,676.1 C1068.8,674.6 1070.8,674.1 1072.2,673.2 C1074.1,672.0 1076.3,671.3 1077.9,669.7 C1080.4,667.2 1082.6,664.3 1084.3,661.2 C1085.7,658.6 1086.3,655.6 1087.1,652.7 C1088.4,648.5 1089.4,644.2 1090.6,640.0 C1091.4,637.3 1092.1,634.6 1093.0,632.0 C1098.3,616.1 1103.6,600.3 1109.1,584.5 C1109.6,583.0 1110.4,581.5 1111.0,580.0 C1115.9,566.9 1120.2,553.6 1125.4,540.6 C1129.3,530.8 1133.1,520.8 1138.5,511.8 C1141.1,507.5 1144.9,504.0 1149.0,501.2 C1152.1,499.1 1156.0,498.5 1159.6,497.3 C1164.8,495.5 1170.0,493.5 1175.3,492.0 C1180.5,490.5 1185.8,489.0 1191.1,488.1 C1194.4,487.5 1197.7,487.8 1201.0,487.6" stroke="#55a868"/><path d="M70.5,580.8 C168.7,581.1 267.0,580.3 365.2,581.6 C370.4,581.7 375.5,583.2 380.4,584.9 C387.3,587.2 394.1,590.2 400.6,593.5 C407.6,597.0 414.0,601.6 420.9,605.2 C425.8,607.8 431.3,609.3 436.0,612.2 C439.8,614.6 443.0,617.7 446.2,620.9 C448.5,623.2 450.5,625.9 452.4,628.5 C455.4,632.6 458.3,636.8 460.9,641.2 C464.6,647.4 468.1,653.9 471.5,660.3 C475.2,667.3 478.3,674.6 482.1,681.5 C485.1,686.9 488.2,692.3 491.7,697.4 C494.2,701.1 497.0,704.7 500.1,708.0 C501.6,709.7 503.4,711.2 505.4,712.3 C508.1,713.7 511.0,714.4 513.9,715.4 C515.9,716.1 517.9,716.7 520.0,717.2 C522.5,717.8 525.1,718.9 527.7,718.6 C530.4,718.3 532.9,716.9 535.1,715.4 C538.7,713.0 541.9,710.0 545.0,707.0 C546.9,705.1 548.5,702.8 550.0,700.6 C556.0,691.9 562.2,683.3 567.7,674.3 C571.9,667.5 575.9,660.6 579.0,653.3 C582.4,645.5 584.1,637.0 587.1,629.0 C591.1,618.1 595.7,607.4 600.0,596.6 C604.8,584.4 609.9,572.3 614.4,560.0 C624.6,531.9 633.6,503.3 643.9,475.2 C650.8,456.4 658.8,438.1 665.8,419.4 C674.2,396.9 681.9,374.1 690.0,351.5 C692.6,344.1 695.3,336.8 698.1,329.5 C700.3,323.7 702.9,318.1 705.2,312.3 C707.3,307.0 709.0,301.5 711.2,296.2 C712.3,293.7 713.6,291.3 715.0,289.0 C715.8,287.6 716.9,286.3 717.8,285.0 C718.5,284.0 719.3,283.0 720.0,282.0 C720.8,283.0 721.6,284.0 722.3,285.0 C723.7,287.0 725.3,288.9 726.4,291.1 C728.9,296.0 730.8,301.2 732.9,306.3 C736.1,314.0 739.2,321.8 742.5,329.5 C747.3,340.5 752.5,351.4 757.1,362.5 C765.0,381.3 772.1,400.4 780.0,419.2 C837.2,556.2 894.7,693.1 952.2,830.0 C954.7,835.9 957.4,841.7 960.0,847.6 C963.6,855.7 967.2,863.8 970.9,871.8 C972.2,874.6 973.6,877.3 975.0,880.0 C976.0,882.0 976.8,884.2 978.2,886.0 C978.9,886.9 980.2,887.3 981.2,888.0 C982.2,887.4 983.3,887.0 984.2,886.2 C985.6,885.0 986.8,883.4 988.0,882.0 C989.2,880.7 990.6,879.5 991.5,877.9 C993.4,874.4 995.1,870.8 996.4,867.0 C998.8,859.8 1000.0,852.4 1002.4,845.2 C1004.9,837.8 1007.8,830.5 1010.9,823.3 C1013.4,817.5 1016.4,812.0 1019.4,806.4 C1022.5,800.7 1025.8,795.0 1029.1,789.4 C1032.9,782.9 1036.8,776.5 1040.6,770.0 C1045.3,761.8 1050.4,753.9 1054.5,745.4 C1063.2,727.5 1071.8,709.4 1079.1,690.9 C1087.2,670.3 1093.4,649.0 1100.9,628.2 C1106.7,612.1 1112.7,596.0 1118.8,580.0 C1121.3,573.3 1124.2,566.7 1126.8,560.0 C1129.0,554.4 1130.8,548.7 1133.3,543.3 C1138.2,532.6 1142.7,521.7 1149.0,511.8 C1155.0,502.3 1162.6,493.8 1170.1,485.5 C1174.9,480.2 1180.1,475.3 1185.8,471.0 C1190.5,467.4 1195.9,464.9 1201.0,461.8" stroke="#c44e52"/></g>
<line x1="70.5" y1="882.5" x2="70.5" y2="887.5" stroke="#6e6e6e"/>
<line x1="146.5" y1="882.5" x2="146.5" y2="887.5" stroke="#6e6e6e"/>
<line x1="222.5" y1="882.5" x2="222.5" y2="887.5" stroke="#6e6e6e"/>
<line x1="298.5" y1="882.5" x2="298.5" y2="887.5" stroke="#6e6e6e"/>
<line x1="374.5" y1="882.5" x2="374.5" y2="887.5" stroke="#6e6e6e"/>
<line x1="451.5" y1="882.5" x2="451.5" y2="887.5" stroke="#6e6e6e"/>
<line x1="527.5" y1="882.5" x2="527.5" y2="887.5" stroke="#6e6e6e"/>
<line x1="603.5" y1="882.5" x2="603.5" y2="887.5" stroke="#6e6e6e"/>
<line x1="679.5" y1="882.5" x2="679.5" y2="887.5" stroke="#6e6e6e"/>
<line x1="755.5" y1="882.5" x2="755.5" y2="887.5" stroke="#6e6e6e"/>
<line x1="831.5" y1="882.5" x2="831.5" y2="887.5" stroke="#6e6e6e"/>
<line x1="908.5" y1="882.5" x2="908.5" y2="887.5" stroke="#6e6e6e"/>
<line x1="984.5" y1="882.5" x2="984.5" y2="887.5" stroke="#6e6e6e"/>
<line x1="1060.5" y1="882.5" x2="1060.5" y2="887.5" stroke="#6e6e6e"/>
<line x1="1136.5" y1="882.5" x2="1136.5" y2="887.5" stroke="#6e6e6e"/>
<line x1="70.5" y1="871.5" x2="75.5" y2="871.5" stroke="#6e6e6e"/>
<line x1="70.5" y1="805.5" x2="75.5" y2="805.5" stroke="#6e6e6e"/>
<line x1="70.5" y1="739.5" x2="75.5" y2="739.5" stroke="#6e6e6e"/>
<line x1="70.5" y1="672.5" x2="75.5" y2="672.5" stroke="#6e6e6e"/>
<line x1="70.5" y1="606.5" x2="75.5" y2="606.5" stroke="#6e6e6e"/>
<line x1="70.5" y1="539.5" x2="75.5" y2="539.5" stroke="#6e6e6e"/>
<line x1="70.5" y1="473.5" x2="75.5" y2="473.5" stroke="#6e6e6e"/>
<line x1="70.5" y1="407.5" x2="75.5" y2="407.5" stroke="#6e6e6e"/>
<line x1="70.5" y1="340.5" x2="75.5" y2="340.5" stroke="#6e6e6e"/>
<line x1="1196.5" y1="871.5" x2="1201.5" y2="871.5" stroke="#6e6e6e"/>
<line x1="1196.5" y1="809.5" x2="1201.5" y2="809.5" stroke="#6e6e6e"/>
<line x1="1196.5" y1="747.5" x2="1201.5" y2="747.5" stroke="#6e6e6e"/>
<line x1="1196.5" y1="685.5" x2="1201.5" y2="685.5" stroke="#6e6e6e"/>
<line x1="1196.5" y1="622.5" x2="1201.5" y2="622.5" stroke="#6e6e6e"/>
<line x1="1196.5" y1="560.5" x2="1201.5" y2="560.5" stroke="#6e6e6e"/>
<line x1="1196.5" y1="498.5" x2="1201.5" y2="498.5" stroke="#6e6e6e"/>
<line x1="1196.5" y1="435.5" x2="1201.5" y2="435.5" stroke="#6e6e6e"/>
<line x1="1196.5" y1="373.5" x2="1201.5" y2="373.5" stroke="#6e6e6e"/>
<line x1="1196.5" y1="311.5" x2="1201.5" y2="311.5" stroke="#6e6e6e"/>
<line x1="1265" y1="858.5" x2="1270.5" y2="858.5" stroke="#6e6e6e"/>
<line x1="1265" y1="766.5" x2="1270.5" y2="766.5" stroke="#6e6e6e"/>
<line x1="1265" y1="673.5" x2="1270.5" y2="673.5" stroke="#6e6e6e"/>
<line x1="1265" y1="581.5" x2="1270.5" y2="581.5" stroke="#6e6e6e"/>
<line x1="1265" y1="489.5" x2="1270.5" y2="489.5" stroke="#6e6e6e"/>
<line x1="1265" y1="396.5" x2="1270.5" y2="396.5" stroke="#6e6e6e"/>
<line x1="1265" y1="304.5" x2="1270.5" y2="304.5" stroke="#6e6e6e"/>
<rect x="70.5" y="284.5" width="1131.0" height="603.0" fill="none" stroke="#5c5c5c"/>
<line x1="1270.5" y1="284.5" x2="1270.5" y2="887.5" stroke="#6a6a6a"/></svg>
<div class="a t" style="right:1516px;top:866px;color:#fff">0</div>
<div class="a t" style="right:1516px;top:800px;color:#fff">20</div>
<div class="a t" style="right:1516px;top:734px;color:#fff">40</div>
<div class="a t" style="right:1516px;top:667px;color:#fff">60</div>
<div class="a t" style="right:1516px;top:601px;color:#fff">80</div>
<div class="a t" style="right:1516px;top:534px;color:#fff">100</div>
<div class="a t" style="right:1516px;top:468px;color:#fff">120</div>
<div class="a t" style="right:1516px;top:402px;color:#fff">140</div>
<div class="a t" style="right:1516px;top:335px;color:#fff">160</div>
<div class="a t" style="left:1207px;top:866px;color:#fff">-5000</div>
<div class="a t" style="left:1207px;top:804px;color:#fff">-4000</div>
<div class="a t" style="left:1207px;top:742px;color:#fff">-3000</div>
<div class="a t" style="left:1207px;top:680px;color:#fff">-2000</div>
<div class="a t" style="left:1207px;top:617px;color:#fff">-1000</div>
<div class="a t" style="left:1207px;top:555px;color:#fff">0</div>
<div class="a t" style="left:1207px;top:493px;color:#fff">1000</div>
<div class="a t" style="left:1207px;top:430px;color:#fff">2000</div>
<div class="a t" style="left:1207px;top:368px;color:#fff">3000</div>
<div class="a t" style="left:1207px;top:306px;color:#fff">4000</div>
<div class="a t" style="left:1275px;top:853px;color:#fff">-3</div>
<div class="a t" style="left:1275px;top:761px;color:#fff">-2</div>
<div class="a t" style="left:1275px;top:668px;color:#fff">-1</div>
<div class="a t" style="left:1275px;top:576px;color:#fff">0</div>
<div class="a t" style="left:1275px;top:484px;color:#fff">1</div>
<div class="a t" style="left:1275px;top:391px;color:#fff">2</div>
<div class="a t" style="left:1275px;top:299px;color:#fff">3</div>
<div class="a t" style="left:67.0px;top:895px;color:#fff">0</div>
<div class="a t" style="left:136.0px;top:895px;color:#fff">0.2</div>
<div class="a t" style="left:212.0px;top:895px;color:#fff">0.4</div>
<div class="a t" style="left:288.0px;top:895px;color:#fff">0.6</div>
<div class="a t" style="left:364.0px;top:895px;color:#fff">0.8</div>
<div class="a t" style="left:448.0px;top:895px;color:#fff">1</div>
<div class="a t" style="left:517.0px;top:895px;color:#fff">1.2</div>
<div class="a t" style="left:593.0px;top:895px;color:#fff">1.4</div>
<div class="a t" style="left:669.0px;top:895px;color:#fff">1.6</div>
<div class="a t" style="left:745.0px;top:895px;color:#fff">1.8</div>
<div class="a t" style="left:828.0px;top:895px;color:#fff">2</div>
<div class="a t" style="left:898.0px;top:895px;color:#fff">2.2</div>
<div class="a t" style="left:974.0px;top:895px;color:#fff">2.4</div>
<div class="a t" style="left:1050.0px;top:895px;color:#fff">2.6</div>
<div class="a t" style="left:1126.0px;top:895px;color:#fff">2.8</div>
<div class="a t" style="left:608.0px;top:912px;color:#fff">Time (s)</div>
<div class="a t" style="left:-1.0px;top:580px;width:70px;transform:rotate(-90deg);transform-origin:50% 50%;color:#fff">Force (kg)</div>
<div class="a t" style="left:1223.5px;top:579px;width:63px;transform:rotate(-90deg);transform-origin:50% 50%;color:#fff">Power (W)</div>
<div class="a t" style="left:1253.0px;top:580px;width:98px;transform:rotate(-90deg);transform-origin:50% 50%;color:#fff">Velocity (m/s)</div>
<div class="a" style="left:80px;top:294px;width:100px;height:62px;background:#252525;border:1px solid #5a5a5a"></div>
<div class="a" style="left:87px;top:301px;width:9px;height:9px;background:#4c72b0"></div>
<div class="a t" style="left:98px;top:300px;color:#fff">Force</div>
<div class="a" style="left:87px;top:314px;width:9px;height:9px;background:#dd8452"></div>
<div class="a t" style="left:98px;top:313px;color:#fff">Jumper Mass</div>
<div class="a" style="left:87px;top:327px;width:9px;height:9px;background:#55a868"></div>
<div class="a t" style="left:98px;top:326px;color:#fff">Power</div>
<div class="a" style="left:87px;top:340px;width:9px;height:9px;background:#c44e52"></div>
<div class="a t" style="left:98px;top:339px;color:#fff">Velocity</div>
<div class="a" style="left:1334px;top:243px;width:240px;height:700px;background:#252525;border:1px solid #565656"></div>
<div class="a t" style="left:1342px;top:256px;color:#22ee22">Controls</div>
<div class="btn" style="left:1342px;top:274px;width:60px;height:19px"></div>
<div class="a t" style="left:1358px;top:279px;color:#fff">TARE</div>
<div class="btn" style="left:1410px;top:274px;width:19px;height:19px"></div>
<div class="a t" style="left:1433px;top:279px;color:#fff">AutoY</div>
<div class="btn" style="left:1342px;top:297px;width:19px;height:19px"></div>
<div class="a t" style="left:1365px;top:302px;color:#fff">Sticky Cursor</div>
<div class="btn" style="left:1342px;top:329px;width:34px;height:19px"></div>
<div class="a t" style="left:1346px;top:334px;color:#fff">20.0</div>
<div class="btn" style="left:1380px;top:329px;width:19px;height:19px"></div>
<div class="a t" style="left:1386px;top:334px;color:#fff">-</div>
<div class="btn" style="left:1403px;top:329px;width:19px;height:19px"></div>
<div class="a t" style="left:1409px;top:334px;color:#fff">+</div>
<div class="btn" style="left:1430px;top:329px;width:80px;height:19px"></div>
<div class="a t" style="left:1438px;top:334px;color:#fff">CALIBRATE</div>
<div class="sep" style="left:1342px;top:366px;width:224px"></div>
<div class="a t" style="left:1342px;top:375px;color:#fff">History</div>
<div class="btn" style="left:1342px;top:393px;width:60px;height:19px"></div>
<div class="a t" style="left:1347px;top:398px;color:#fff">Clr All</div>
<div class="btn" style="left:1410px;top:393px;width:60px;height:19px"></div>
<div class="a t" style="left:1429px;top:398px;color:#fff">Del</div>
<div class="a" style="left:1342px;top:416px;width:223px;height:265px;background:#303035;overflow:hidden">
<div class="a" style="left:0;top:18px;width:209px;height:17px;background:#245a8a"></div>
<div class="a" style="left:212px;top:3px;width:8px;height:71px;border-radius:4px;background:#555"></div>
<div class="a t" style="left:4px;top:4px;color:#fff">#1245: 51.6cm (649ms)</div>
<div class="a t" style="left:4px;top:21px;color:#fff">#1244: 11.2cm (302ms)</div>
<div class="a t" style="left:4px;top:38px;color:#fff">#1243: 53.9cm (663ms)</div>
<div class="a t" style="left:4px;top:55px;color:#fff">#1242: 3.2cm (161ms)</div>
<div class="a t" style="left:4px;top:72px;color:#fff">#1241: 6.6cm (231ms)</div>
<div class="a t" style="left:4px;top:89px;color:#fff">#1240: 51.2cm (647ms)</div>
<div class="a t" style="left:4px;top:106px;color:#fff">#1239: 48.7cm (630ms)</div>
<div class="a t" style="left:4px;top:123px;color:#fff">#1238: 30.4cm (498ms)</div>
<div class="a t" style="left:4px;top:140px;color:#fff">#1237: 32.6cm (515ms)</div>
<div class="a t" style="left:4px;top:157px;color:#fff">#1236: 33.6cm (524ms)</div>
<div class="a t" style="left:4px;top:174px;color:#fff">#1235: 27.8cm (477ms)</div>
<div class="a t" style="left:4px;top:191px;color:#fff">#1234: 32.0cm (511ms)</div>
<div class="a t" style="left:4px;top:208px;color:#fff">#1233: 30.9cm (502ms)</div>
<div class="a t" style="left:4px;top:225px;color:#fff">#1232: 25.7cm (458ms)</div>
<div class="a t" style="left:4px;top:242px;color:#fff">#1231: 27.8cm (476ms)</div>
<div class="a t" style="left:4px;top:259px;color:#fff">#1230: 30.0cm (495ms)</div>
</div>
</body></html>
